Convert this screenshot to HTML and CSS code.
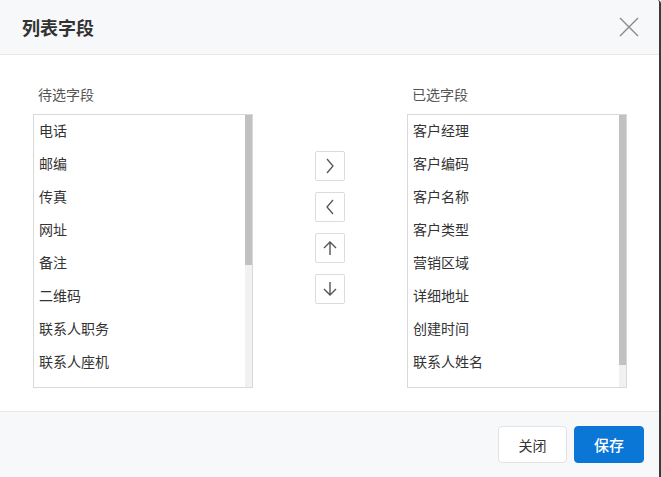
FILE: index.html
```html
<!DOCTYPE html>
<html lang="zh">
<head>
<meta charset="utf-8">
<title>列表字段</title>
<link rel="stylesheet" href="styles.css">
</head>
<body>
<div class="dialog">
  <div class="header">
    <div class="title">列表字段</div>
    <button class="close" aria-label="关闭">
      <svg width="20" height="20" viewBox="0 0 20 20"><path d="M1 1L19 19M19 1L1 19" stroke="#8a8a8a" stroke-width="1.4" fill="none"/></svg>
    </button>
  </div>
  <div class="body">
    <div class="col">
      <div class="label">待选字段</div>
      <div class="listbox">
        <ul class="list">
          <li>电话</li><li>邮编</li><li>传真</li><li>网址</li><li>备注</li><li>二维码</li><li>联系人职务</li><li>联系人座机</li>
        </ul>
        <div class="scrollbar"><div class="thumb" style="height:150px"></div></div>
      </div>
    </div>
    <div class="ops">
      <button class="op"><svg width="12" height="16" viewBox="0 0 12 16"><path d="M3 1L9 8L3 15" stroke="#555" stroke-width="1.3" fill="none"/></svg></button>
      <button class="op"><svg width="12" height="16" viewBox="0 0 12 16"><path d="M9 1L3 8L9 15" stroke="#555" stroke-width="1.3" fill="none"/></svg></button>
      <button class="op"><svg width="16" height="16" viewBox="0 0 16 16"><path d="M8 2V15M2 8L8 2L14 8" stroke="#555" stroke-width="1.4" fill="none"/></svg></button>
      <button class="op"><svg width="16" height="16" viewBox="0 0 16 16"><path d="M8 1V14M2 8L8 14L14 8" stroke="#555" stroke-width="1.4" fill="none"/></svg></button>
    </div>
    <div class="col">
      <div class="label">已选字段</div>
      <div class="listbox">
        <ul class="list">
          <li>客户经理</li><li>客户编码</li><li>客户名称</li><li>客户类型</li><li>营销区域</li><li>详细地址</li><li>创建时间</li><li>联系人姓名</li>
        </ul>
        <div class="scrollbar"><div class="thumb" style="height:250px"></div></div>
      </div>
    </div>
  </div>
  <div class="footer">
    <button class="btn btn-default">关闭</button>
    <button class="btn btn-primary">保存</button>
  </div>
</div>
</body>
</html>
```
FILE: styles.css
```css
* { box-sizing: border-box; }
html, body { margin: 0; padding: 0; background: #fff; }
body {
  font-family: "Noto Sans CJK SC", "Microsoft YaHei", sans-serif;
  color: #333;
  width: 661px;
  height: 477px;
  overflow: hidden;
}
.dialog {
  width: 661px;
  height: 477px;
  display: flex;
  flex-direction: column;
  border-right: 2px solid #3a3a3a;
  border-top-right-radius: 4px;
  overflow: hidden;
  background: #fff;
}
.header {
  height: 55px;
  flex: none;
  background: #f7f8fa;
  border-bottom: 1px solid #e6e6e6;
  display: flex;
  align-items: center;
  justify-content: space-between;
  padding: 0 20px 0 22px;
}
.title {
  font-size: 18px;
  font-weight: 700;
  color: #333;
  line-height: 24px;
}
.close {
  border: 0;
  background: transparent;
  padding: 0;
  width: 20px;
  height: 20px;
  display: flex;
  cursor: pointer;
}
.body {
  flex: 1;
  display: grid;
  grid-template-columns: 220px 30px 220px;
  column-gap: 62px;
  padding: 29px 0 0 33px;
  align-items: start;
}
.label {
  font-size: 14px;
  line-height: 20px;
  color: #555;
  padding-left: 5px;
  margin-bottom: 10px;
}
.listbox {
  position: relative;
  height: 274px;
  border: 1px solid #d9d9d9;
  background: #fff;
  overflow: hidden;
}
.list {
  list-style: none;
  margin: 0;
  padding: 0 8px 0 0;
}
.list li {
  font-size: 14px;
  line-height: 33px;
  height: 33px;
  padding-left: 5px;
  margin-top: -1px;
  margin-bottom: 1px;
  color: #333;
  white-space: nowrap;
}
.scrollbar {
  position: absolute;
  top: 0;
  right: 0;
  bottom: 0;
  width: 7px;
  background: #f1f1f1;
}
.thumb {
  width: 100%;
  background: #c1c1c1;
}
.ops {
  display: flex;
  flex-direction: column;
  gap: 11px;
  padding-top: 67px;
}
.op {
  width: 30px;
  height: 30px;
  padding: 0;
  background: #fff;
  border: 1px solid #dcdcdc;
  border-radius: 2px;
  display: flex;
  align-items: center;
  justify-content: center;
  cursor: pointer;
}
.footer {
  height: 66px;
  flex: none;
  background: #f7f8fa;
  border-top: 1px solid #e6e6e6;
  display: flex;
  justify-content: flex-end;
  align-items: flex-start;
  gap: 7px;
  padding: 14px 15px 0 0;
}
.btn {
  height: 37px;
  border-radius: 4px;
  font-family: inherit;
  font-size: 14px;
  padding: 0;
  cursor: pointer;
}
.btn-default {
  width: 69px;
  background: #fff;
  border: 1px solid #e3e3e3;
  color: #333;
}
.btn-primary {
  width: 70px;
  background: #0a76d6;
  border: 1px solid #0a76d6;
  color: #fff;
  font-size: 15px;
  font-weight: 500;
}
```
